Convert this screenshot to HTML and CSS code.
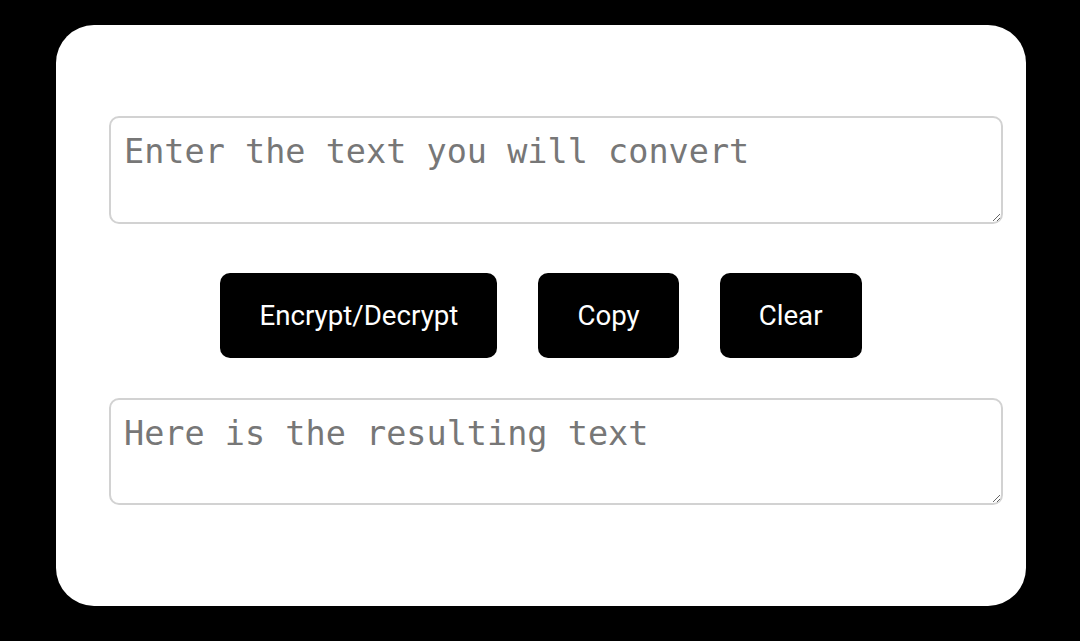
FILE: index.html
```html
<!DOCTYPE html>
<html lang="en">
<head>
<meta charset="utf-8">
<title>Encrypt/Decrypt</title>
<link rel="stylesheet" href="styles.css">
</head>
<body>
<main class="card">
  <textarea class="field field-input" placeholder="Enter the text you will convert"></textarea>
  <div class="actions">
    <button class="btn btn-wide" type="button">Encrypt/Decrypt</button>
    <button class="btn" type="button">Copy</button>
    <button class="btn" type="button">Clear</button>
  </div>
  <textarea class="field field-output" placeholder="Here is the resulting text" readonly></textarea>
</main>
</body>
</html>
```
FILE: styles.css
```css
html, body {
  margin: 0;
  padding: 0;
  background: #000;
  height: 100%;
}
body {
  display: flex;
  justify-content: center;
  align-items: flex-start;
  padding-left: 2px;
  box-sizing: border-box;
}
.card {
  margin-top: 25px;
  width: 970px;
  height: 581px;
  box-sizing: border-box;
  background: #fff;
  border-radius: 38px;
  display: flex;
  flex-direction: column;
  align-items: center;
  padding-top: 91px;
}
.field {
  width: 894px;
  margin-left: 30px;
  box-sizing: border-box;
  border: 2px solid #d2d2d2;
  border-radius: 10px;
  padding: 14px 13px 10px;
  font-family: "DejaVu Sans Mono", monospace;
  font-size: 33.5px;
  line-height: 40px;
  color: #333;
  background: #fff;
  outline: none;
  resize: both;
}
.field::placeholder {
  color: #777;
}
.field-input {
  height: 108px;
}
.field-output {
  height: 107px;
}
.actions {
  display: flex;
  gap: 41px;
  margin: 49px 0 40px;
}
.btn {
  height: 85px;
  padding: 0 39px;
  border: none;
  border-radius: 10px;
  background: #000;
  color: #fff;
  font-family: Roboto, "Noto Sans", sans-serif;
  font-size: 27.7px;
  cursor: pointer;
}
```
